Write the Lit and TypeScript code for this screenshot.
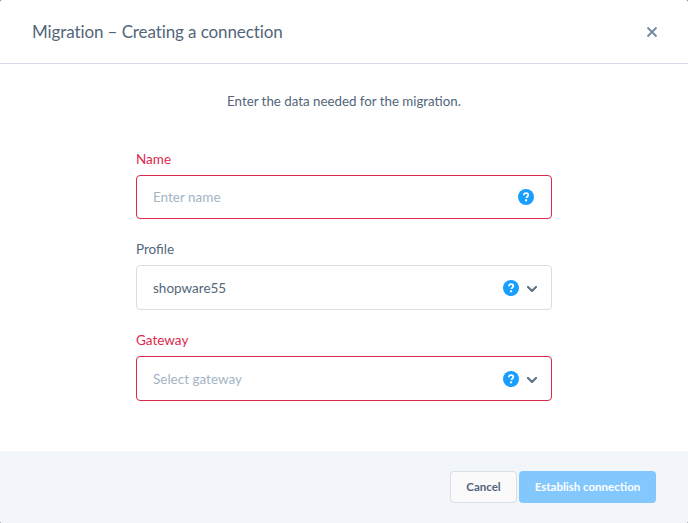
import { LitElement, html, css } from 'lit';
import { customElement } from 'lit/decorators.js';

const helpIcon = html`
  <svg class="help" width="16" height="16" viewBox="0 0 16 16">
    <circle cx="8" cy="8" r="8" fill="#189eff"></circle>
    <path d="M5.8 6.3C5.9 5 6.9 4.2 8.1 4.2c1.3 0 2.2.8 2.2 1.9 0 .9-.5 1.3-1.1 1.7-.5.3-.7.5-.7 1.1" fill="none" stroke="#fff" stroke-width="1.8"></path>
    <rect x="7.1" y="10.3" width="2" height="2" fill="#fff"></rect>
  </svg>
`;

const chevron = html`
  <svg class="chevron" width="10" height="6" viewBox="0 0 10 6">
    <path d="M1 1l4 4 4-4" fill="none" stroke="#5f7285" stroke-width="2.2" stroke-linecap="round" stroke-linejoin="round"></path>
  </svg>
`;

@customElement('app-root')
export class AppRoot extends LitElement {
  static styles = css`
    :host {
      display: block;
      width: 688px;
      height: 523px;
      overflow: hidden;
      background: #63676c;
      font-family: 'Lato', 'Noto Sans', sans-serif;
      color: #52667a;
    }

    .modal {
      display: flex;
      flex-direction: column;
      height: 523px;
      background: #fff;
      border-radius: 2px;
      overflow: hidden;
    }

    .header {
      display: flex;
      align-items: center;
      justify-content: space-between;
      height: 63px;
      padding: 0 30px 0 32px;
      border-bottom: 1px solid #d9dce8;
      flex: none;
    }
    .title {
      font-size: 17px;
      letter-spacing: -0.1px;
      color: #52667a;
    }
    .close {
      display: block;
    }

    .body {
      flex: 1;
      display: flex;
      flex-direction: column;
      align-items: center;
    }
    .intro {
      margin-top: 28px;
      height: 18px;
      line-height: 18px;
      font-size: 13.3px;
      color: #52667a;
    }

    .form {
      width: 416px;
      margin-top: 40px;
      display: flex;
      flex-direction: column;
      gap: 21px;
    }
    .field label {
      display: block;
      height: 18px;
      line-height: 18px;
      font-size: 13.5px;
      margin-bottom: 7px;
    }
    .control {
      box-sizing: border-box;
      height: 45px;
      display: flex;
      align-items: center;
      padding: 0 14px 0 16px;
      border: 1px solid #d8dde6;
      border-radius: 4px;
      font-size: 13.5px;
      background: #fff;
    }
    .text {
      flex: 1;
    }
    .placeholder {
      color: #a3b4c5;
    }
    .error label {
      color: #de294c;
    }
    .error .control {
      border-color: #de294c;
    }
    .name .control {
      height: 44px;
      padding-right: 17px;
    }
    .chevron {
      margin-left: 8px;
      margin-top: 2px;
    }

    .footer {
      flex: none;
      box-sizing: border-box;
      height: 72px;
      padding: 20px 32px 0 0;
      background: #f2f5f9;
      display: flex;
      justify-content: flex-end;
      align-items: flex-start;
      gap: 2px;
    }
    .btn {
      box-sizing: border-box;
      height: 32px;
      padding-bottom: 1px;
      display: flex;
      align-items: center;
      justify-content: center;
      border-radius: 4px;
      font-size: 11.5px;
      font-weight: 700;
    }
    .cancel {
      width: 67px;
      background: #fafafb;
      border: 1px solid #d8dde6;
      color: #52667a;
    }
    .primary {
      width: 137px;
      background: #82c8ff;
      color: #fff;
    }
  `;

  render() {
    return html`
      <div class="modal">
        <div class="header">
          <div class="title">Migration – Creating a connection</div>
          <svg class="close" width="12" height="12" viewBox="0 0 12 12">
            <path d="M1.5 1.5l9 9M10.5 1.5l-9 9" fill="none" stroke="#758ca3" stroke-width="2"></path>
          </svg>
        </div>
        <div class="body">
          <div class="intro">Enter the data needed for the migration.</div>
          <div class="form">
            <div class="field error name">
              <label>Name</label>
              <div class="control">
                <span class="text placeholder">Enter name</span>
                ${helpIcon}
              </div>
            </div>
            <div class="field">
              <label>Profile</label>
              <div class="control">
                <span class="text">shopware55</span>
                ${helpIcon}${chevron}
              </div>
            </div>
            <div class="field error">
              <label>Gateway</label>
              <div class="control">
                <span class="text placeholder">Select gateway</span>
                ${helpIcon}${chevron}
              </div>
            </div>
          </div>
        </div>
        <div class="footer">
          <div class="btn cancel">Cancel</div>
          <div class="btn primary">Establish connection</div>
        </div>
      </div>
    `;
  }
}
